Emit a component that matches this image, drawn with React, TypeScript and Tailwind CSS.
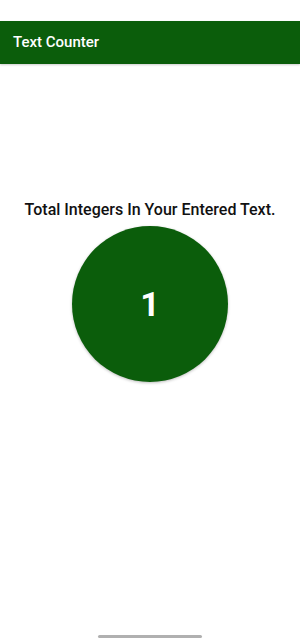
export default function App() {
  return (
    <div className="w-[300px] h-[643px] bg-white flex flex-col relative overflow-hidden" style={{ fontFamily: "Roboto, 'Noto Sans', sans-serif" }}>
      <div className="h-[21px] bg-white" />
      <div className="h-[43px] bg-[#0b5d0b] flex items-center px-[13px] shadow-[0_1px_2px_rgba(0,0,0,0.2)]">
        <span className="text-white text-[15px] font-medium">Text Counter</span>
      </div>
      <div className="flex flex-col items-center pt-[136px]">
        <div className="text-[16px] font-medium text-[#111] leading-[20px]">Total Integers In Your Entered Text.</div>
        <div className="mt-[6px] w-[156px] h-[156px] rounded-full bg-[#0b5d0b] flex items-center justify-center shadow-[0_1px_3px_rgba(0,0,0,0.25)]">
          <span className="text-white text-[34px] font-bold">1</span>
        </div>
      </div>
      <div className="absolute bottom-[5px] left-[98px] w-[104px] h-[3px] rounded-full bg-[#b0b0b0]" />
    </div>
  );
}
